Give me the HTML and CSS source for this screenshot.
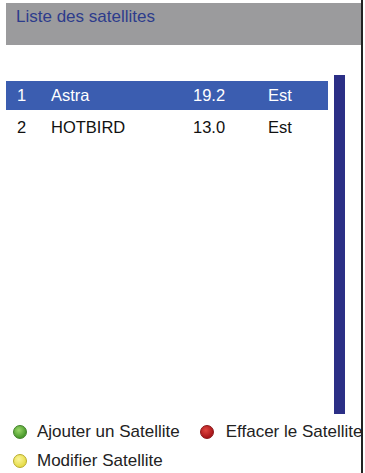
FILE: index.html
```html
<!DOCTYPE html>
<html lang="fr">
<head>
    <meta charset="UTF-8">
    <meta name="viewport" content="width=device-width, initial-scale=1.0">
    <title>Liste des satellites</title>
    <link rel="stylesheet" href="styles.css">
</head>
<body>
    <div class="screen">
        <div class="header">Liste des satellites</div>
        <div class="main">
            <div class="list">
                <div class="row selected">
                    <span class="num">1</span>
                    <span class="name">Astra</span>
                    <span class="pos">19.2</span>
                    <span class="dir">Est</span>
                </div>
                <div class="row">
                    <span class="num">2</span>
                    <span class="name">HOTBIRD</span>
                    <span class="pos">13.0</span>
                    <span class="dir">Est</span>
                </div>
            </div>
            <div class="scrollbar"></div>
        </div>
        <div class="legend">
            <div class="legend-row">
                <span class="key"><span class="dot green"></span>Ajouter un Satellite</span>
                <span class="key red-key"><span class="dot red"></span>Effacer le Satellite</span>
            </div>
            <div class="legend-row">
                <span class="key"><span class="dot yellow"></span>Modifier Satellite</span>
            </div>
        </div>
    </div>
</body>
</html>
```

FILE: styles.css
```css
body {
    margin: 0;
    padding: 0;
    background-color: #fff;
    font-family: "Liberation Sans", Arial, sans-serif;
    overflow: hidden;
}
.screen {
    width: 355px;
    height: 473px;
    padding-left: 6px;
    border-right: 2px solid #222;
    box-sizing: content-box;
    overflow: hidden;
}
.header {
    margin-top: 3px;
    height: 42px;
    background-color: #9b9b9d;
    color: #2d3c8c;
    font-size: 17px;
    padding: 4px 0 0 10px;
    box-sizing: border-box;
}
.main {
    display: flex;
    height: 339px;
    margin-top: 30px;
}
.list {
    width: 322px;
    padding-top: 6px;
}
.scrollbar {
    width: 11px;
    margin-left: 6px;
    background-color: #2b2f86;
}
.row {
    display: flex;
    align-items: center;
    height: 29px;
    margin-bottom: 3px;
    font-size: 16.5px;
    color: #111;
}
.row.selected {
    background-color: #3b5db0;
    color: #fff;
}
.num {
    width: 34px;
    padding-left: 11px;
}
.name {
    width: 142px;
}
.pos {
    width: 75px;
}
.legend {
    margin-top: 3px;
}
.legend-row {
    display: flex;
    align-items: center;
    height: 29px;
    font-size: 17px;
    color: #222;
    white-space: nowrap;
}
.key {
    display: flex;
    align-items: center;
}
.red-key {
    margin-left: 13px;
}
.red-key .dot {
    margin-right: 12px;
}
.dot {
    width: 14px;
    height: 14px;
    border-radius: 50%;
    margin: 0 10px 0 7px;
    box-sizing: border-box;
}
.dot.green {
    background: radial-gradient(circle at 40% 35%, #9ad86a, #4a9a2c 70%);
    border: 1px solid #3f7f28;
}
.dot.red {
    background: radial-gradient(circle at 40% 35%, #e0453f, #a8161a 70%);
    border: 1px solid #8a1416;
}
.dot.yellow {
    background: radial-gradient(circle at 40% 35%, #fbf59a, #e6dc4a 70%);
    border: 1px solid #b8ab2a;
}
```
